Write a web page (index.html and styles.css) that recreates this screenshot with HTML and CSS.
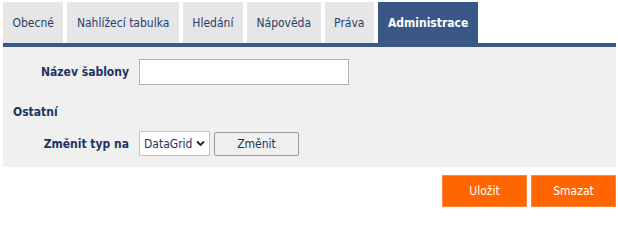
FILE: index.html
```html
<!DOCTYPE html>
<html lang="cs">
<head>
<meta charset="utf-8">
<title>Administrace</title>
<link rel="stylesheet" href="styles.css">
</head>
<body>
<div class="page">
  <ul class="tabs">
    <li class="tab">Obecné</li>
    <li class="tab">Nahlížecí tabulka</li>
    <li class="tab">Hledání</li>
    <li class="tab">Nápověda</li>
    <li class="tab">Práva</li>
    <li class="tab active">Administrace</li>
  </ul>
  <div class="panel">
    <div class="row first">
      <label class="label">Název šablony</label>
      <input class="text" type="text">
    </div>
    <div class="section">Ostatní</div>
    <div class="row">
      <label class="label">Změnit typ na</label>
      <div class="select">DataGrid <svg class="chev" width="9" height="7" viewBox="0 0 9 7"><path d="M1 1.5 L4.5 5 L8 1.5" fill="none" stroke="#222" stroke-width="1.8"/></svg></div>
      <button class="btn">Změnit</button>
    </div>
  </div>
  <div class="actions">
    <button class="obtn">Uložit</button>
    <button class="obtn">Smazat</button>
  </div>
</div>
</body>
</html>
```
FILE: styles.css
```css
html, body { margin: 0; padding: 0; background: #fff; }
body { font-family: "DejaVu Sans Condensed", "DejaVu Sans", sans-serif; font-stretch: condensed; font-size: 12px; color: #1c3461; }
.page { padding: 2px 2px 0 3px; }
.tabs { list-style: none; margin: 0; padding: 0; display: flex; gap: 4px; border-bottom: 4px solid #3a5785; }
.tab { height: 41px; padding: 1px 9.5px 0; box-sizing: border-box; background: #e6e6e6; display: flex; align-items: center; color: #2a3d6a; }
.tab.active { background: #3a5785; color: #fff; font-weight: bold; padding: 1px 10px 0; }
.panel { background: #f0f0f0; padding: 12px 0 7px 0; height: 101px; box-sizing: content-box; }
.row { display: flex; align-items: center; }
.label { width: 126px; text-align: right; font-weight: bold; padding-right: 0; box-sizing: border-box; color: #1c3461; }
.text { width: 210px; height: 26px; box-sizing: border-box; border: 1px solid #b5b5b5; background: #fff; margin: 0 0 0 10px; padding: 0; }
.section { font-weight: bold; padding: 20px 0 0 10px; height: 26px; box-sizing: border-box; }
.row + .section + .row { margin-top: 20px; }
.select { margin-left: 10px; width: 71px; height: 25px; box-sizing: border-box; border: 1px solid #c4c4c4; background: #fff; display: flex; align-items: center; padding-left: 4px; gap: 4px; color: #1c3461; }
.chev { display: block; }
.btn { margin-left: 4px; width: 85px; height: 24px; box-sizing: border-box; border: 1px solid #9a9a9a; border-radius: 2px; background: #efefef; font: inherit; color: #1c3461; padding: 0; }
.actions { display: flex; justify-content: flex-end; gap: 4px; padding-top: 8px; }
.obtn { width: 85px; height: 32px; background: #ff6600; border: 1px solid #ff8a3d; color: #fff; font: inherit; padding: 0; }
```
